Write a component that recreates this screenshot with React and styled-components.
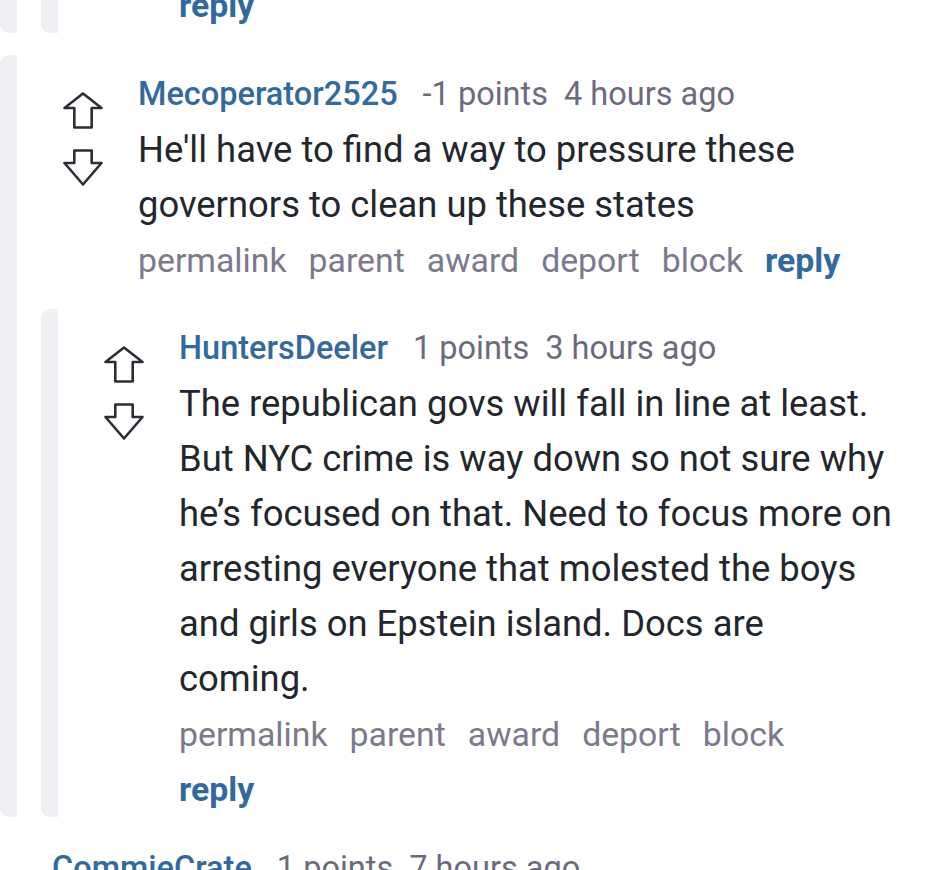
import React from 'react';
import styled, { createGlobalStyle } from 'styled-components';

const GlobalStyle = createGlobalStyle`
  html, body {
    margin: 0;
    padding: 0;
    overflow: hidden;
    background: #ffffff;
  }
  body {
    font-family: Roboto, "Liberation Sans", Arial, sans-serif;
    color: #23272d;
  }
`;

const UpArrow = () => (
  <svg width="40" height="37" viewBox="0 0 40 37" fill="none">
    <path
      d="M20 1.5 L38.5 16 H28.7 V35.5 H11.3 V16 H1.5 Z"
      stroke="#2a2e35"
      strokeWidth="2.6"
      strokeLinejoin="round"
    />
  </svg>
);

const DownArrow = () => (
  <svg width="40" height="37" viewBox="0 0 40 37" fill="none">
    <path
      d="M11.3 1.5 H28.7 V14 H38.5 L20 35.5 L1.5 14 H11.3 Z"
      stroke="#2a2e35"
      strokeWidth="2.6"
      strokeLinejoin="round"
    />
  </svg>
);

const thread = {
  author: 'Mecoperator2525',
  points: '-1 points',
  age: '4 hours ago',
  text: "He'll have to find a way to pressure these governors to clean up these states",
  children: [
    {
      author: 'HuntersDeeler',
      points: '1 points',
      age: '3 hours ago',
      text: 'The republican govs will fall in line at least. But NYC crime is way down so not sure why he\u2019s focused on that. Need to focus more on arresting everyone that molested the boys and girls on Epstein island. Docs are coming.',
      children: [],
    },
  ],
};

const next = {
  author: 'CommieCrate',
  points: '1 points',
  age: '7 hours ago',
};

const actions = ['permalink', 'parent', 'award', 'deport', 'block'];

const VoteColumn = ({ top }) => (
  <Votes top={top}>
    <VoteBtn><UpArrow /></VoteBtn>
    <VoteBtn><DownArrow /></VoteBtn>
  </Votes>
);

const MetaLine = ({ c }) => (
  <Meta>
    <Author>{c.author}</Author>
    <Points>{c.points}</Points>
    <Age>{c.age}</Age>
  </Meta>
);

const Comment = ({ c }) => (
  <>
    <Row>
      <VoteColumn />
      <Body>
        <MetaLine c={c} />
        <Text>{c.text}</Text>
        <Actions>
          {actions.map(a => <Action key={a}>{a}</Action>)}
          <Action reply>reply</Action>
        </Actions>
      </Body>
    </Row>
    {c.children.map((child, i) => (
      <Nested key={i} space="21px">
        <Comment c={child} />
      </Nested>
    ))}
  </>
);

export default function App() {
  return (
    <Viewport>
      <GlobalStyle />
      <Page>
        <Nested>
          <Nested>
            <Row tail>
              <VoteSpacer />
              <Body>
                <Actions>
                  <Action reply>reply</Action>
                </Actions>
              </Body>
            </Row>
          </Nested>
        </Nested>
        <Nested space="22px">
          <Comment c={thread} />
        </Nested>
        <TopLevel>
          <Row>
            <VoteColumn top />
            <Body>
              <MetaLine c={next} />
            </Body>
          </Row>
        </TopLevel>
      </Page>
    </Viewport>
  );
}

const Viewport = styled.div`
  width: 931px;
  height: 870px;
  overflow: hidden;
`

const Page = styled.div`
  margin-left: -24px;
  margin-top: -23px;
  padding-right: 32px;
`

const Nested = styled.div`
  margin-left: 24px;
  margin-top: ${props => props.space || '0'};
  border-left: 17px solid #eff0f3;
  border-radius: 9px 0 0 9px;
`

const TopLevel = styled.div`
  margin-top: 12px;
`

const Row = styled.div`
  display: flex;
  align-items: flex-start;
  padding-top: ${props => props.tail ? '0' : '17px'};
`

const Votes = styled.div`
  flex: 0 0 40px;
  display: flex;
  flex-direction: column;
  gap: 20px;
  margin-left: ${props => props.top ? '1px' : '46px'};
  margin-right: 35px;
  padding-top: ${props => props.top ? '26px' : '20px'};
`

const VoteSpacer = styled.div`
  flex: 0 0 40px;
  margin-left: 46px;
  margin-right: 35px;
`

const VoteBtn = styled.div`
  width: 40px;
  height: 37px;
  svg { display: block; }
`

const Body = styled.div`
  flex: 1;
  min-width: 0;
`

const Meta = styled.div`
  display: flex;
  align-items: baseline;
  font-size: 32.5px;
  line-height: 44px;
  margin-bottom: 6px;
  white-space: nowrap;
`

const Author = styled.span`
  color: #336a9e;
  font-weight: 500;
  margin-right: 25px;
`

const Points = styled.span`
  color: #6c6b7d;
  margin-right: 16px;
`

const Age = styled.span`
  color: #6c6b7d;
`

const Text = styled.div`
  font-size: 36.4px;
  line-height: 55px;
  color: #23272d;
`

const Actions = styled.div`
  display: flex;
  flex-wrap: wrap;
  margin-top: 1px;
  font-size: 33.8px;
  line-height: 55px;
`

const Action = styled.span`
  margin-right: 22px;
  color: ${props => props.reply ? '#336a9e' : '#7b7a8d'};
  font-weight: ${props => props.reply ? 700 : 400};
`
